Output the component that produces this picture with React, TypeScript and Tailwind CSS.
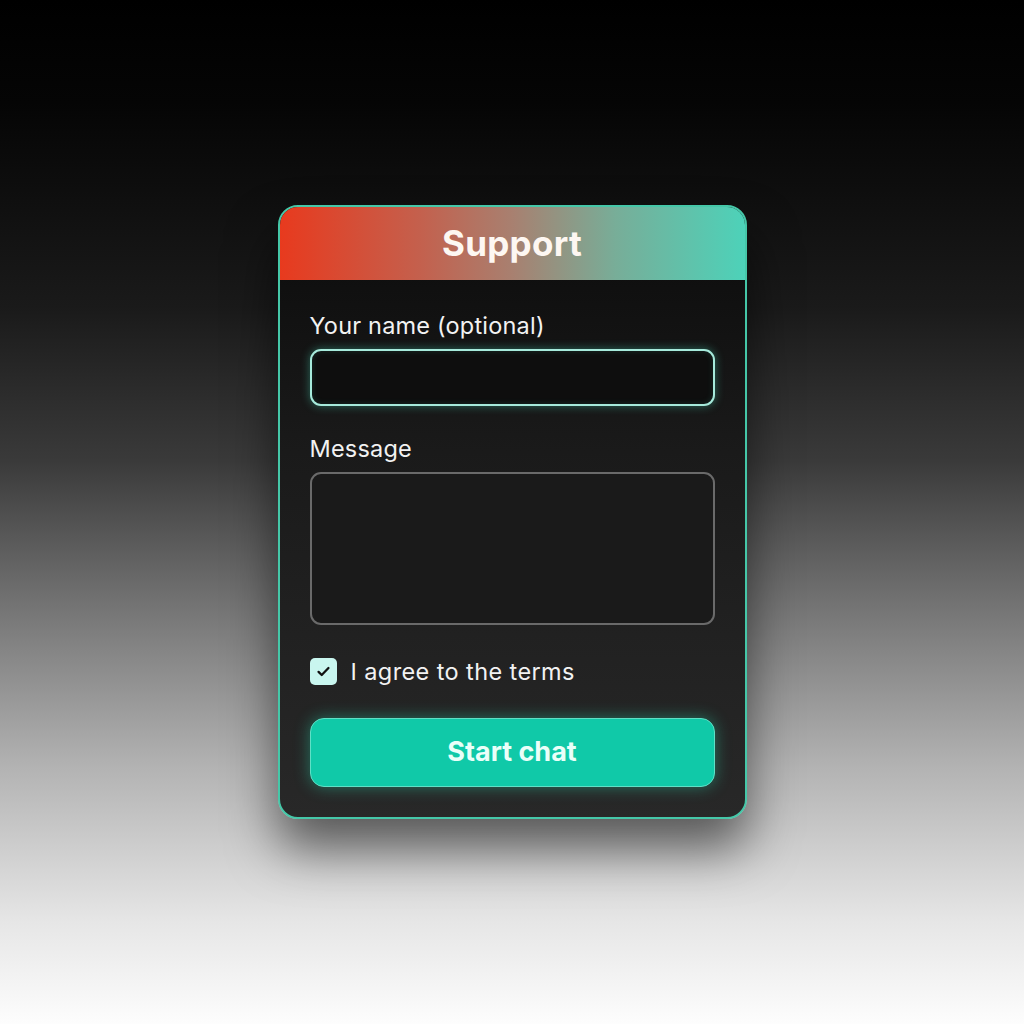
import React, { useState } from "react";

export default function App() {
  const [agreed, setAgreed] = useState(true);

  return (
    <div
      className="w-full h-[1024px] flex items-center justify-center bg-[linear-gradient(to_bottom,#000000_0%,#050505_10%,#1a1a1a_30%,#3a3a3a_45%,#777777_60%,#b3b3b3_75%,#e6e6e6_90%,#fdfdfd_100%)]"
      style={{ fontFamily: "Inter, 'Noto Sans', sans-serif" }}
    >
      <div className="w-[469px] h-[614px] rounded-[20px] border-2 border-[#45c7a8] overflow-hidden flex flex-col shadow-[0_30px_50px_rgba(0,0,0,0.55)] bg-[linear-gradient(to_bottom,#0b0b0b_0%,#1a1a1a_40%,#282828_100%)]">
        <div className="h-[73px] shrink-0 flex items-center justify-center bg-[linear-gradient(to_right,#e83a1e_0%,#c4604d_30%,#a88070_50%,#78ad98_72%,#4dd2b9_100%)]">
          <h1 className="text-[35px] font-bold text-[#fdf7f2] tracking-[0.3px]">Support</h1>
        </div>

        <div className="flex flex-col px-[30px] pt-[31px]">
          <label className="text-[23.5px] text-[#f2f2f2] leading-[30px] tracking-[0.2px]">Your name (optional)</label>
          <input
            type="text"
            className="mt-[8px] h-[57px] w-full rounded-[11px] border-2 border-[#a6eadb] bg-[#0e0e0e] shadow-[0_0_10px_rgba(70,210,180,0.45),inset_0_0_6px_rgba(70,210,180,0.15)] outline-none text-white px-3"
          />

          <label className="mt-[28px] text-[23.5px] text-[#f2f2f2] leading-[30px] tracking-[0.2px]">Message</label>
          <textarea className="mt-[8px] h-[153px] w-full rounded-[11px] border-2 border-[#6a6a6a] bg-[#1a1a1a] outline-none resize-none text-white p-3" />

          <div className="mt-[33px] flex items-center gap-[14px] h-[27px]">
            <button
              onClick={() => setAgreed(!agreed)}
              className="w-[27px] h-[27px] rounded-[5px] bg-[#c9f6ef] flex items-center justify-center"
            >
              {agreed && (
                <svg width="17" height="17" viewBox="0 0 24 24" fill="none" stroke="#111" strokeWidth="3.2" strokeLinecap="round" strokeLinejoin="round">
                  <path d="M5 12.5l4.5 4.5L19 7" />
                </svg>
              )}
            </button>
            <span className="text-[23.5px] text-[#f2f2f2] leading-[27px] tracking-[0.4px]">I agree to the terms</span>
          </div>

          <button className="mt-[33px] h-[69px] w-full rounded-[14px] bg-[#10c9a8] border border-[#5fe0c6] shadow-[0_0_16px_rgba(40,210,170,0.45)] text-[27px] font-bold text-[#eafff9]">
            Start chat
          </button>
        </div>
      </div>
    </div>
  );
}
